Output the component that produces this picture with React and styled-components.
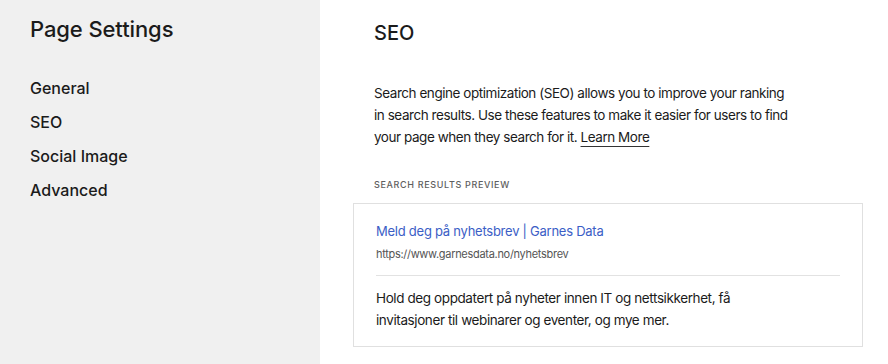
import React from "react";
import styled, { createGlobalStyle } from "styled-components";

const Global = createGlobalStyle`
  html, body { margin: 0; padding: 0; }
  body { font-family: Inter, "Noto Sans", sans-serif; color: #1b1b1b; -webkit-font-smoothing: antialiased; }
`;

const Page = styled.div`
  display: flex;
  width: 888px;
  height: 364px;
  overflow: hidden;
  background: #fff;
`;

const Sidebar = styled.aside`
  width: 320px;
  flex: none;
  background: #f0f0f0;
  padding: 14px 30px 0;
  box-sizing: border-box;
`;

const SideTitle = styled.h1`
  margin: 0;
  font-size: 22px;
  line-height: 30px;
  font-weight: 500;
  letter-spacing: -0.1px;
`;

const Nav = styled.nav`
  display: flex;
  flex-direction: column;
  gap: 12px;
  margin-top: 33px;
`;

const NavItem = styled.a`
  font-size: 16px;
  line-height: 22px;
  font-weight: 500;
  color: #1b1b1b;
`;

const Main = styled.main`
  flex: 1;
  padding: 18px 26px 0 54px;
  box-sizing: border-box;
`;

const Heading = styled.h2`
  margin: 0;
  font-size: 20px;
  line-height: 30px;
  font-weight: 500;
`;

const Para = styled.p`
  margin: 34px 0 0;
  font-size: 13.5px;
  line-height: 22px;
  letter-spacing: -0.45px;
  width: 418px;
`;

const Learn = styled.a`
  color: #1b1b1b;
  text-decoration: underline;
  text-decoration-color: #333;
  text-decoration-thickness: 1px;
  text-underline-offset: 4px;
`;

const Label = styled.div`
  margin-top: 30px;
  font-size: 9px;
  line-height: 14px;
  letter-spacing: 0.65px;
  text-transform: uppercase;
  font-weight: 500;
  color: #5e5e5e;
`;

const Preview = styled.div`
  margin: 11px 0 0 -21px;
  width: 510px;
  box-sizing: border-box;
  border: 1px solid #e0e0e0;
  padding: 17px 22px 15px 22px;
`;

const ResultTitle = styled.div`
  font-size: 13px;
  line-height: 20px;
  letter-spacing: -0.25px;
  color: #3b5ec6;
`;

const Url = styled.div`
  margin-top: 5px;
  font-size: 11px;
  line-height: 16px;
  letter-spacing: -0.3px;
  color: #555;
`;

const Divider = styled.hr`
  margin: 13px 0 11px;
  border: none;
  border-top: 1px solid #e2e2e2;
`;

const Desc = styled.div`
  font-size: 13.5px;
  line-height: 22px;
  letter-spacing: -0.4px;
  color: #1b1b1b;
  max-width: 380px;
`;

export default function App() {
  return (
    <>
      <Global />
      <Page>
        <Sidebar>
          <SideTitle>Page Settings</SideTitle>
          <Nav>
            <NavItem>General</NavItem>
            <NavItem>SEO</NavItem>
            <NavItem>Social Image</NavItem>
            <NavItem>Advanced</NavItem>
          </Nav>
        </Sidebar>
        <Main>
          <Heading>SEO</Heading>
          <Para>
            Search engine optimization (SEO) allows you to improve your ranking in search
            results. Use these features to make it easier for users to find your page when
            they search for it. <Learn>Learn More</Learn>
          </Para>
          <Label>Search Results Preview</Label>
          <Preview>
            <ResultTitle>Meld deg på nyhetsbrev | Garnes Data</ResultTitle>
            <Url>https://www.garnesdata.no/nyhetsbrev</Url>
            <Divider />
            <Desc>
              Hold deg oppdatert på nyheter innen IT og nettsikkerhet, få invitasjoner til
              webinarer og eventer, og mye mer.
            </Desc>
          </Preview>
        </Main>
      </Page>
    </>
  );
}
